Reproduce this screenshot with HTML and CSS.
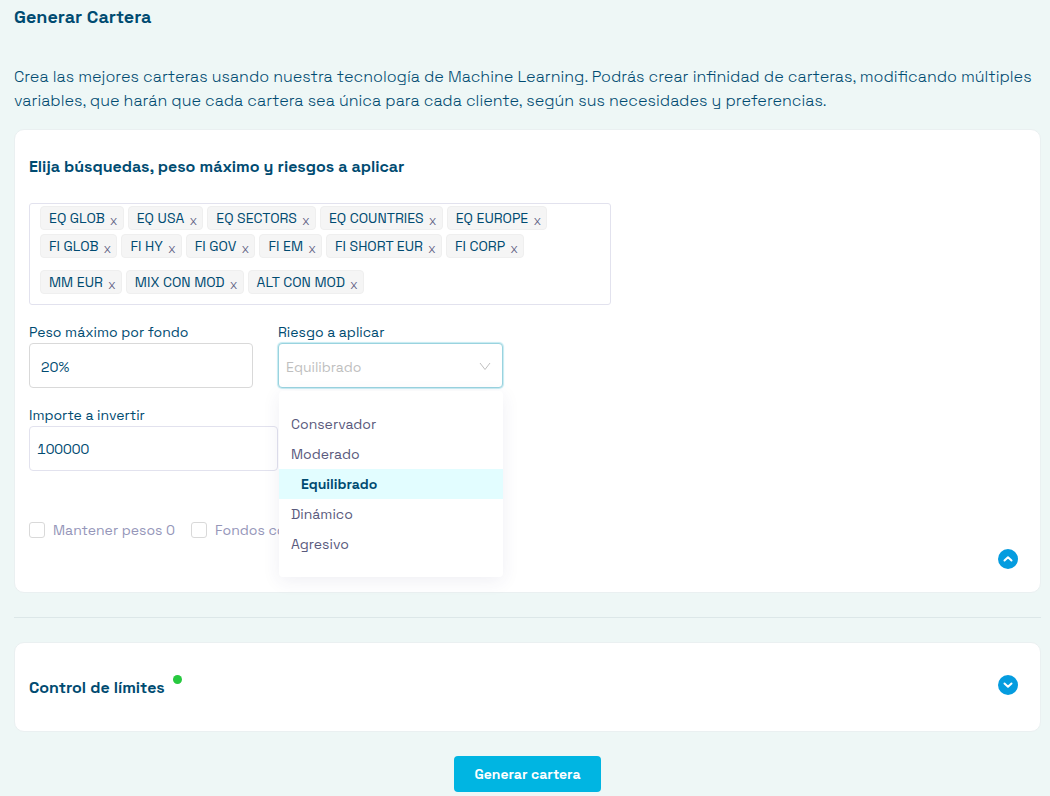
FILE: index.html
```html
<!DOCTYPE html>
<html lang="es">
<head>
<meta charset="utf-8">
<meta name="viewport" content="width=device-width, initial-scale=1">
<title>Generar Cartera</title>
<link rel="stylesheet" href="styles.css">
</head>
<body>
<main class="page">
  <h1 class="page-title">Generar Cartera</h1>
  <p class="intro">Crea las mejores carteras usando nuestra tecnología de Machine Learning. Podrás crear infinidad de carteras, modificando múltiples variables, que harán que cada cartera sea única para cada cliente, según sus necesidades y preferencias.</p>

  <section class="card card-search">
    <h2 class="card-title">Elija búsquedas, peso máximo y riesgos a aplicar</h2>
    <div class="tag-box">
      <div class="tag-row">
        <span class="tag">EQ GLOB<button class="tag-x" aria-label="Quitar EQ GLOB">x</button></span>
        <span class="tag">EQ USA<button class="tag-x" aria-label="Quitar EQ USA">x</button></span>
        <span class="tag">EQ SECTORS<button class="tag-x" aria-label="Quitar EQ SECTORS">x</button></span>
        <span class="tag">EQ COUNTRIES<button class="tag-x" aria-label="Quitar EQ COUNTRIES">x</button></span>
        <span class="tag">EQ EUROPE<button class="tag-x" aria-label="Quitar EQ EUROPE">x</button></span>
      </div>
      <div class="tag-row">
        <span class="tag">FI GLOB<button class="tag-x" aria-label="Quitar FI GLOB">x</button></span>
        <span class="tag">FI HY<button class="tag-x" aria-label="Quitar FI HY">x</button></span>
        <span class="tag">FI GOV<button class="tag-x" aria-label="Quitar FI GOV">x</button></span>
        <span class="tag">FI EM<button class="tag-x" aria-label="Quitar FI EM">x</button></span>
        <span class="tag">FI SHORT EUR<button class="tag-x" aria-label="Quitar FI SHORT EUR">x</button></span>
        <span class="tag">FI CORP<button class="tag-x" aria-label="Quitar FI CORP">x</button></span>
      </div>
      <div class="tag-row tag-row-last">
        <span class="tag">MM EUR<button class="tag-x" aria-label="Quitar MM EUR">x</button></span>
        <span class="tag">MIX CON MOD<button class="tag-x" aria-label="Quitar MIX CON MOD">x</button></span>
        <span class="tag">ALT CON MOD<button class="tag-x" aria-label="Quitar ALT CON MOD">x</button></span>
      </div>
    </div>

    <div class="fields">
      <div class="field">
        <label for="peso">Peso máximo por fondo</label>
        <input class="control control-weight" id="peso" type="text" value="20%">
      </div>
      <div class="field field-risk">
        <label for="riesgo">Riesgo a aplicar</label>
        <div class="select-wrap">
          <select class="control control-risk" id="riesgo">
            <option>Conservador</option>
            <option>Moderado</option>
            <option selected>Equilibrado</option>
            <option>Dinámico</option>
            <option>Agresivo</option>
          </select>
          <svg class="select-arrow" viewBox="0 0 12 12" aria-hidden="true"><path d="M1 3 L6 9.5 L11 3"/></svg>
        </div>
        <ul class="menu" role="listbox" aria-label="Riesgo a aplicar">
          <li class="option" role="option">Conservador</li>
          <li class="option" role="option">Moderado</li>
          <li class="option option-selected" role="option" aria-selected="true">Equilibrado</li>
          <li class="option" role="option">Dinámico</li>
          <li class="option" role="option">Agresivo</li>
        </ul>
      </div>
    </div>

    <div class="field field-amount">
      <label for="importe">Importe a invertir</label>
      <input class="control control-amount" id="importe" type="text" value="100000">
    </div>

    <div class="card-footer">
      <div class="checks">
        <label class="check"><input type="checkbox">Mantener pesos 0</label>
        <label class="check"><input type="checkbox">Fondos co</label>
      </div>
      <button class="toggle" aria-label="Contraer"><svg viewBox="0 0 20 20" aria-hidden="true"><path d="M6.5 11.5 L10 8.2 L13.5 11.5"/></svg></button>
    </div>
  </section>

  <hr class="divider">

  <section class="card card-limits">
    <div class="limits-heading">
      <h2 class="card-title">Control de límites</h2>
      <span class="status-dot"></span>
    </div>
    <button class="toggle" aria-label="Expandir"><svg viewBox="0 0 20 20" aria-hidden="true"><path d="M6.5 8.5 L10 11.8 L13.5 8.5"/></svg></button>
  </section>

  <button class="submit">Generar cartera</button>
</main>
</body>
</html>
```
FILE: styles.css
```css
* {
  box-sizing: border-box;
}

body {
  margin: 0;
  background: #eef7f6;
  color: #004b71;
  font-family: "Space Grotesk", Inter, "Open Sans", sans-serif;
  font-size: 14px;
}

button,
input,
select {
  font: inherit;
  color: inherit;
}

button {
  border: 0;
  padding: 0;
  cursor: pointer;
}

.page {
  display: flex;
  flex-direction: column;
  padding: 4px 9px 4px 14px;
}

.page-title {
  margin: 0;
  font-size: 18px;
  line-height: 26px;
  font-weight: 600;
}

.intro {
  margin: 35px 0 16px;
  font-size: 16px;
  line-height: 24px;
  font-weight: 300;
}

.card {
  background: #fff;
  border: 1px solid #eaf0f1;
  border-radius: 10px;
  padding: 0 14px;
}

.card-title {
  margin: 0;
  font-size: 16px;
  line-height: 24px;
  font-weight: 600;
}

.card-search {
  padding-top: 25px;
  padding-bottom: 23px;
}

.tag-box {
  display: flex;
  flex-direction: column;
  gap: 4px;
  max-width: 582px;
  margin: 24px 0 16px;
  padding: 2px 10px 10px;
  border: 1px solid #e2e2ee;
  border-radius: 3px;
}

.tag-row {
  display: flex;
  flex-wrap: wrap;
  gap: 4px;
}

.tag-row-last {
  margin-top: 8px;
}

.tag {
  display: flex;
  gap: 5px;
  height: 24px;
  padding: 0 5px 0 8px;
  border: 1px solid #efefef;
  border-radius: 4px;
  background: #f5f5f5;
  line-height: 22px;
}

.tag-x {
  min-width: 8px;
  padding-top: 4px;
  background: none;
  color: #5a5a80;
  font-size: 13px;
  font-weight: 300;
  line-height: 20px;
}

.fields {
  display: flex;
  gap: 25px;
}

.field {
  display: flex;
  flex-direction: column;
  line-height: 22px;
}

.field-risk {
  position: relative;
}

.control {
  height: 45px;
  border: 1px solid #d9d9d9;
  border-radius: 4px;
  background: #fff;
  outline: 0;
}

.control-weight {
  width: 224px;
  padding: 2px 11px 0;
}

.select-wrap {
  display: grid;
  align-items: center;
}

.select-wrap > * {
  grid-area: 1 / 1;
}

.control-risk {
  width: 225px;
  padding: 2px 30px 0 7px;
  appearance: none;
  border-color: #9ad3df;
  box-shadow: 0 0 1px 1px #c5eaf1;
  color: #bfbfbf;
}

.select-arrow {
  justify-self: end;
  width: 12px;
  height: 12px;
  margin-right: 12px;
  fill: none;
  stroke: #bfbfbf;
  pointer-events: none;
}

.menu {
  position: absolute;
  top: 100%;
  left: 1px;
  right: 0;
  z-index: 2;
  margin: 3px 0 0;
  padding: 18px 0;
  border-radius: 4px;
  background: #fff;
  box-shadow: 0 4px 18px rgba(50, 50, 110, 0.08);
  list-style: none;
  color: #5a5a7d;
}

.option {
  padding: 0 12px;
  line-height: 30px;
}

.option-selected {
  padding-left: 22px;
  background: #e2fdff;
  color: #004b71;
  font-weight: 600;
}

.field-amount {
  margin-top: 16px;
}

.control-amount {
  width: 249px;
  padding: 0 7px;
  border-color: #e2e2ee;
  font-variant-numeric: tabular-nums;
}

.card-footer {
  display: flex;
  align-items: flex-end;
  justify-content: space-between;
  margin-top: 48px;
  padding-right: 8px;
}

.checks {
  display: flex;
  align-self: flex-start;
  gap: 16px;
}

.check {
  display: flex;
  align-items: center;
  gap: 8px;
  color: #9596b9;
  line-height: 22px;
}

.check input {
  appearance: none;
  width: 16px;
  height: 16px;
  margin: 0;
  border: 1px solid #d9d9d9;
  border-radius: 3px;
  background: #fff;
}

.toggle {
  display: block;
  width: 20px;
  height: 20px;
  border-radius: 50%;
  background: #059cdf;
}

.card-search .toggle {
  margin-top: 30px;
}

.toggle svg {
  display: block;
  fill: none;
  stroke: #fff;
  stroke-width: 2;
  stroke-linecap: round;
  stroke-linejoin: round;
}

.divider {
  width: 100%;
  margin: 24px 0;
  border: 0;
  border-top: 1px solid #dce7e8;
}

.card-limits {
  display: flex;
  justify-content: space-between;
  padding: 32px 22px 30px 14px;
}

.limits-heading {
  display: flex;
  gap: 8px;
}

.limits-heading .card-title {
  line-height: 26px;
}

.status-dot {
  width: 9px;
  height: 9px;
  border-radius: 50%;
  background: #27c93f;
}

.submit {
  align-self: center;
  height: 36px;
  margin-top: 24px;
  padding: 0 20px;
  border-radius: 4px;
  background: #00b5e2;
  color: #fff;
  font-weight: 600;
}
```
